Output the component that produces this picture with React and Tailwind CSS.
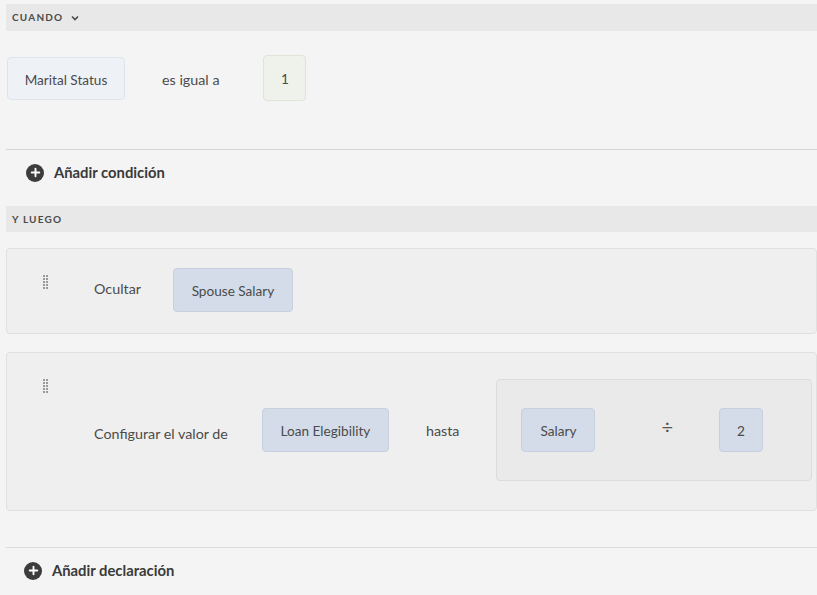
import { Plus } from 'lucide-react';

function Grip() {
  return (
    <div className="grid grid-cols-2 gap-x-[1px] gap-y-[1px] w-[5px]">
      {Array.from({ length: 10 }).map((_, i) => (
        <span key={i} className="w-[2px] h-[2px] bg-[#9a9a9a]" />
      ))}
    </div>
  );
}

function AddButton({ label }) {
  return (
    <div className="flex items-center gap-[10px] text-[14.8px] font-bold text-[#3a3a3a]">
      <span className="w-[18px] h-[18px] rounded-full bg-[#3c3c3c] flex items-center justify-center">
        <Plus className="w-[13px] h-[13px] text-white" strokeWidth={3.5} />
      </span>
      {label}
    </div>
  );
}

function Chip({ children, className }) {
  return (
    <div className={`flex items-center justify-center rounded-[4px] border text-[13.6px] text-[#4b4b4b] pt-[3px] ${className}`}>
      {children}
    </div>
  );
}

export default function App() {
  return (
    <div className="w-[817px] h-[595px] bg-[#f4f4f4] overflow-hidden pt-[4px] pl-[6px] font-['Lato','Noto_Sans',sans-serif] text-[#4b4b4b]">
      {/* Cuando */}
      <div className="h-[27px] bg-[#e8e8e8] flex items-center pl-[6px] gap-[8px] text-[10px] font-bold tracking-[0.12em] text-[#4b4b4b]">
        CUANDO
        <svg width="8" height="6" viewBox="0 0 8 6" className="mt-[1px]">
          <path d="M1 1.5 L4 4.5 L7 1.5" fill="none" stroke="#4b4b4b" strokeWidth="1.6" />
        </svg>
      </div>

      <div className="h-[118px] flex items-start pt-[26px] pl-[1px]">
        <Chip className="w-[118px] h-[43px] bg-[#eef1f6] border-[#dfe4eb]">Marital Status</Chip>
        <span className="ml-[37px] mt-[12px] text-[14.3px]">es igual a</span>
        <Chip className="ml-[44px] w-[43px] h-[46px] bg-[#eff2ea] border-[#dfe3d8] -mt-[2px] text-[12px]">1</Chip>
      </div>

      <div className="border-t border-[#d6d6d6] h-[46px] flex items-center pl-[20px]">
        <AddButton label="Añadir condición" />
      </div>

      {/* Y luego */}
      <div className="mt-[11px] h-[26px] bg-[#e8e8e8] flex items-center pl-[6px] text-[10px] font-bold tracking-[0.12em] text-[#4b4b4b]">
        Y LUEGO
      </div>

      <div className="mt-[16px] h-[86px] bg-[#efefef] border border-[#e0e0e0] rounded-[4px] flex items-start">
        <div className="ml-[36px] mt-[26px]">
          <Grip />
        </div>
        <span className="ml-[46px] mt-[29px] text-[14.3px]">Ocultar</span>
        <Chip className="ml-[32px] mt-[19px] w-[120px] h-[44px] bg-[#d3dce8] border-[#c6d0de]">Spouse Salary</Chip>
      </div>

      <div className="mt-[18px] h-[159px] bg-[#efefef] border border-[#e0e0e0] rounded-[4px] flex items-start">
        <div className="ml-[36px] mt-[26px]">
          <Grip />
        </div>
        <span className="ml-[46px] mt-[70px] text-[14.3px]">Configurar el valor de</span>
        <Chip className="ml-[34px] mt-[55px] w-[127px] h-[44px] bg-[#d3dce8] border-[#c6d0de]">Loan Elegibility</Chip>
        <span className="ml-[37px] mt-[67px] text-[14.3px]">hasta</span>
        <div className="ml-[37px] mt-[26px] w-[316px] h-[102px] bg-[#eaeaea] border border-[#dcdcdc] rounded-[4px] flex items-center pl-[24px]">
          <Chip className="w-[74px] h-[44px] bg-[#d3dce8] border-[#c6d0de]">Salary</Chip>
          <span className="ml-[66px] -mt-[8px] text-[20px] text-[#555]">÷</span>
          <Chip className="ml-[46px] w-[44px] h-[44px] bg-[#d3dce8] border-[#c6d0de]">2</Chip>
        </div>
      </div>

      <div className="mt-[36px] border-t border-[#dcdcdc] h-[46px] flex items-center pl-[18px]">
        <AddButton label="Añadir declaración" />
      </div>
    </div>
  );
}
